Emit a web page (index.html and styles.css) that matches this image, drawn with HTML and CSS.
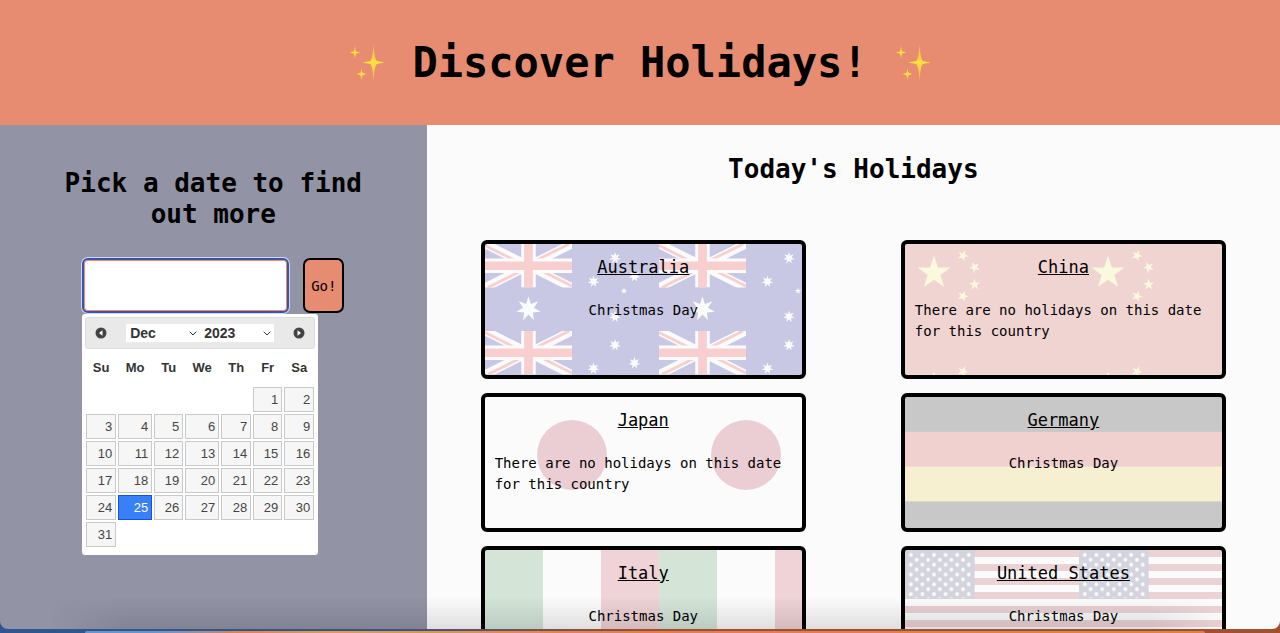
FILE: index.html
```html
<!DOCTYPE html>
<html lang="en">
<head>
<meta charset="utf-8">
<title>Discover Holidays!</title>
<link rel="stylesheet" href="styles.css">
</head>
<body>
<svg class="defs" width="0" height="0" aria-hidden="true">
  <defs>
    <linearGradient id="gold" x1="0" y1="0" x2="0" y2="1"><stop offset="0" stop-color="#f3b25a"/><stop offset=".5" stop-color="#ffe03c"/><stop offset="1" stop-color="#f3b64c"/></linearGradient>
    <symbol id="sparkles" viewBox="0 0 36 38">
      <g fill="url(#gold)">
        <path d="M24.500 0Q25.500 16 28 17L35.500 18.500L28 20Q25.500 21 24.500 37Q23.500 21 21 20L13.500 18.500L21 17Q23.500 16 24.500 0Z"/>
        <path d="M6 1Q6.500 7 7.700 7.500L11 8.500L7.700 9.500Q6.500 10 6 16Q5.500 10 4.300 9.500L1 8.500L4.300 7.500Q5.500 7 6 1Z"/>
        <path d="M12.500 23.500Q13 28.500 14.200 29L17.500 30L14.200 31Q13 31.500 12.500 37Q12 31.500 10.800 31L7.500 30L10.800 29Q12 28.500 12.500 23.500Z"/>
      </g>
    </symbol>
    <polygon id="star7" points="0,-100 19.300,-40 78.200,-62.300 43.300,-9.900 97.500,22.300 34.700,27.700 43.400,90.100 0,44.400 -43.400,90.100 -34.700,27.700 -97.500,22.300 -43.300,-9.900 -78.200,-62.300 -19.300,-40"/>
    <polygon id="star5" points="0,-100 22.500,-30.900 95.100,-30.900 36.300,11.800 58.800,80.900 0,38.200 -58.800,80.900 -36.300,11.800 -95.100,-30.900 -22.500,-30.900"/>
    <pattern id="flag-au" width="174" height="87" patternUnits="userSpaceOnUse">
      <rect width="174" height="87" fill="#00008b"/>
      <svg width="87" height="43.500" viewBox="0 0 60 30">
        <path d="M0 0L60 30M60 0L0 30" stroke="#fff" stroke-width="6"/>
        <path d="M0 1L30 16M30 14L60 29M30 14L58 0M30 16L2 30" stroke="#ee2020" stroke-width="2"/>
        <path d="M30 0V30M0 15H60" stroke="#fff" stroke-width="10"/>
        <path d="M30 0V30M0 15H60" stroke="#ee2020" stroke-width="6"/>
      </svg>
      <g fill="#fff">
        <use href="#star7" transform="translate(43.500 65) scale(.125)"/>
        <use href="#star7" transform="translate(130 14) scale(.06)"/>
        <use href="#star7" transform="translate(108.500 37.500) scale(.06)"/>
        <use href="#star7" transform="translate(149.500 32) scale(.06)"/>
        <use href="#star7" transform="translate(130 72.500) scale(.06)"/>
        <use href="#star5" transform="translate(139 47) scale(.034)"/>
      </g>
    </pattern>
    <pattern id="flag-cn" width="174" height="116" patternUnits="userSpaceOnUse">
      <rect width="174" height="116" fill="#c93c34"/>
      <g fill="#fff36a">
        <use href="#star5" transform="translate(29 29) scale(.174)"/>
        <use href="#star5" transform="translate(58 11.600) rotate(-120) scale(.058)"/>
        <use href="#star5" transform="translate(69.600 23.200) rotate(-98) scale(.058)"/>
        <use href="#star5" transform="translate(69.600 40.600) rotate(-74) scale(.058)"/>
        <use href="#star5" transform="translate(58 52.200) rotate(-51) scale(.058)"/>
      </g>
    </pattern>
    <pattern id="flag-jp" width="174" height="116" patternUnits="userSpaceOnUse">
      <rect width="174" height="116" fill="#fff"/><circle cx="87" cy="58" r="35" fill="#b01f3c"/>
    </pattern>
    <pattern id="flag-de" width="174" height="104.400" patternUnits="userSpaceOnUse">
      <rect width="174" height="35" fill="#000"/><rect y="34.800" width="174" height="35" fill="#cc2c2c"/><rect y="69.600" width="174" height="35" fill="#eac92c"/>
    </pattern>
    <pattern id="flag-it" width="174" height="116" patternUnits="userSpaceOnUse">
      <rect width="174" height="116" fill="#fff"/><rect width="58" height="116" fill="#3c9050"/><rect x="116" width="58" height="116" fill="#c43745"/>
    </pattern>
    <pattern id="us-stars" width="11.600" height="9.800" patternUnits="userSpaceOnUse">
      <circle cx="5.800" cy="4.900" r="1.900" fill="#fff"/>
      <g fill="#fff"><circle r="1.900"/><circle cx="11.600" r="1.900"/><circle cy="9.800" r="1.900"/><circle cx="11.600" cy="9.800" r="1.900"/></g>
    </pattern>
    <pattern id="flag-us" width="174" height="91" patternUnits="userSpaceOnUse">
      <rect width="174" height="91" fill="#fff"/>
      <path d="M0 3.500H174M0 17.500H174M0 31.500H174M0 45.500H174M0 59.500H174M0 73.500H174M0 87.500H174" stroke="#a83240" stroke-width="7"/>
      <rect width="69.600" height="49" fill="#3c3f70"/>
      <rect x="-3" y="-3" width="63" height="46" transform="translate(5.800 4.900)" fill="url(#us-stars)"/>
    </pattern>
  </defs>
</svg>

<div class="window">
  <header class="banner">
    <svg class="sparkles" aria-hidden="true"><use href="#sparkles"/></svg>
    <h1 class="title">Discover Holidays!</h1>
    <svg class="sparkles" aria-hidden="true"><use href="#sparkles"/></svg>
  </header>

  <div class="columns">
    <aside class="picker">
      <h2 class="heading">Pick a date to find out more</h2>
      <div class="picker-body">
        <form class="date-form">
          <input class="date-input" type="text" aria-label="Date">
          <button class="go" type="button">Go!</button>
        </form>
        <div class="calendar">
          <div class="calendar-bar">
            <button class="nav" type="button" aria-label="Previous month"><svg viewBox="0 0 12 12"><circle cx="6" cy="6" r="5.500" fill="#444"/><path d="M7.500 3.200V8.800L4 6Z" fill="#fff"/></svg></button>
            <div class="selects">
              <span class="select-wrap"><select class="select" aria-label="Month"><option>Dec</option></select><svg class="chevron" viewBox="0 0 8 5"><path d="M.7 .7L4 4L7.300 .7" fill="none" stroke="#333"/></svg></span>
              <span class="select-wrap"><select class="select" aria-label="Year"><option>2023</option></select><svg class="chevron" viewBox="0 0 8 5"><path d="M.7 .7L4 4L7.300 .7" fill="none" stroke="#333"/></svg></span>
            </div>
            <button class="nav" type="button" aria-label="Next month"><svg viewBox="0 0 12 12"><circle cx="6" cy="6" r="5.500" fill="#444"/><path d="M4.500 3.200V8.800L8 6Z" fill="#fff"/></svg></button>
          </div>
          <table class="days">
            <colgroup><col class="c-32"><col class="c-36"><col class="c-31"><col class="c-36"><col class="c-32"><col class="c-31"><col class="c-32"></colgroup>
            <thead><tr><th>Su</th><th>Mo</th><th>Tu</th><th>We</th><th>Th</th><th>Fr</th><th>Sa</th></tr></thead>
            <tbody>
              <tr><td></td><td></td><td></td><td></td><td></td><td><a href="#">1</a></td><td><a href="#">2</a></td></tr>
              <tr><td><a href="#">3</a></td><td><a href="#">4</a></td><td><a href="#">5</a></td><td><a href="#">6</a></td><td><a href="#">7</a></td><td><a href="#">8</a></td><td><a href="#">9</a></td></tr>
              <tr><td><a href="#">10</a></td><td><a href="#">11</a></td><td><a href="#">12</a></td><td><a href="#">13</a></td><td><a href="#">14</a></td><td><a href="#">15</a></td><td><a href="#">16</a></td></tr>
              <tr><td><a href="#">17</a></td><td><a href="#">18</a></td><td><a href="#">19</a></td><td><a href="#">20</a></td><td><a href="#">21</a></td><td><a href="#">22</a></td><td><a href="#">23</a></td></tr>
              <tr><td><a href="#">24</a></td><td><a class="today" href="#">25</a></td><td><a href="#">26</a></td><td><a href="#">27</a></td><td><a href="#">28</a></td><td><a href="#">29</a></td><td><a href="#">30</a></td></tr>
              <tr><td><a href="#">31</a></td><td></td><td></td><td></td><td></td><td></td><td></td></tr>
            </tbody>
          </table>
        </div>
      </div>
    </aside>

    <main class="holidays">
      <h2 class="heading">Today's Holidays</h2>
      <div class="cards">
        <article class="card"><svg class="flag" aria-hidden="true"><rect width="100%" height="100%" fill="url(#flag-au)"/></svg><h3 class="country">Australia</h3><p class="holiday">Christmas Day</p></article>
        <article class="card"><svg class="flag" aria-hidden="true"><rect width="100%" height="100%" fill="url(#flag-cn)"/></svg><h3 class="country">China</h3><p class="holiday">There are no holidays on this date for this country</p></article>
        <article class="card"><svg class="flag" aria-hidden="true"><rect width="100%" height="100%" fill="url(#flag-jp)"/></svg><h3 class="country">Japan</h3><p class="holiday">There are no holidays on this date for this country</p></article>
        <article class="card"><svg class="flag" aria-hidden="true"><rect width="100%" height="100%" fill="url(#flag-de)"/></svg><h3 class="country">Germany</h3><p class="holiday">Christmas Day</p></article>
        <article class="card"><svg class="flag" aria-hidden="true"><rect width="100%" height="100%" fill="url(#flag-it)"/></svg><h3 class="country">Italy</h3><p class="holiday">Christmas Day</p></article>
        <article class="card"><svg class="flag" aria-hidden="true"><rect width="100%" height="100%" fill="url(#flag-us)"/></svg><h3 class="country">United States</h3><p class="holiday">Christmas Day</p></article>
      </div>
    </main>
  </div>
</div>
<div class="desktop"><div class="dock"></div></div>
</body>
</html>
```
FILE: styles.css
```css
* { box-sizing: border-box; }

body {
  margin: 0;
  height: 100vh;
  display: flex;
  flex-direction: column;
  overflow: hidden;
  background: linear-gradient(90deg, #2f568f 0 30%, #a0502c 50%);
  color: #000;
  font-family: "DejaVu Sans Mono", monospace;
}

.defs { position: absolute; }

/* Browser window */
.window {
  position: relative;
  flex: 1;
  min-height: 0;
  display: flex;
  flex-direction: column;
  overflow: hidden;
  border-radius: 0 0 8px 8px;
}

.window::after {
  content: "";
  position: absolute;
  inset: auto 50px 0 50px;
  height: 32px;
  background: linear-gradient(transparent, rgba(0, 0, 0, .11));
  -webkit-mask-image: linear-gradient(90deg, transparent, #000 80px calc(100% - 80px), transparent);
  mask-image: linear-gradient(90deg, transparent, #000 80px calc(100% - 80px), transparent);
  pointer-events: none;
}

.banner {
  flex: none;
  display: flex;
  align-items: center;
  justify-content: center;
  gap: 27px;
  padding: 36px 0;
  background: #e78c71;
}

.title {
  margin: 0;
  font-size: 42px;
  line-height: 53px;
}

.sparkles { width: 36px; height: 38px; }

.columns {
  flex: 1;
  min-height: 0;
  display: grid;
  grid-template-columns: 1fr 2fr;
}

.heading {
  margin: 0;
  font-size: 26px;
  line-height: 31px;
  text-align: center;
}

/* Date picker column */
.picker {
  display: flex;
  flex-direction: column;
  align-items: center;
  gap: 28px;
  padding: 43px 48px 0;
  background: #9294a6;
}

.date-form { display: flex; gap: 14px; }

.date-input {
  width: 207px;
  height: 55px;
  border: 2px solid #3c52a6;
  border-radius: 6px;
  outline: none;
  background: #fff;
  box-shadow: 0 0 0 1px #ccd6f4, inset 0 0 0 1px #e78c71;
  font: inherit;
  font-size: 14px;
}

.go {
  padding: 0 6px;
  border: 2px solid #000;
  border-radius: 7px;
  background: #e78c71;
  color: #000;
  font: inherit;
  font-size: 14px;
}

.calendar {
  width: 236px;
  margin-top: 1px;
  padding: 3px;
  border-radius: 3px;
  background: #fff;
  color: #333;
  font-family: "Liberation Sans", Arial, sans-serif;
  font-size: 14px;
}

.calendar-bar {
  display: flex;
  align-items: center;
  justify-content: space-between;
  height: 32px;
  padding: 0 9px;
  border: 1px solid #ddd;
  border-radius: 3px;
  background: #e9e9e9;
}

.nav {
  width: 12px;
  height: 12px;
  padding: 0;
  border: 0;
  background: none;
}

.nav svg { display: block; width: 12px; height: 12px; }

.selects { display: flex; }

.select-wrap { position: relative; }

.select {
  display: block;
  width: 74px;
  height: 18px;
  padding: 0 4px;
  appearance: none;
  border: 0;
  border-radius: 0;
  background: #fff;
  color: #333;
  font: bold 14px/18px "Liberation Sans", Arial, sans-serif;
}

.chevron {
  position: absolute;
  right: 3px;
  top: 7px;
  width: 8px;
  height: 5px;
  pointer-events: none;
}

.days {
  width: 100%;
  table-layout: fixed;
  border-collapse: collapse;
  margin-bottom: 4px;
}

.c-31 { width: 31px; }
.c-32 { width: 32px; }
.c-36 { width: 36px; }

.days th {
  height: 37px;
  padding: 0;
  font-size: 13px;
  vertical-align: middle;
}

.days td { height: 27px; padding: 1px; }

.days a {
  display: block;
  padding: 3px 3px 3px 0;
  border: 1px solid #c9c9c9;
  background: #f6f6f6;
  color: #454545;
  font-size: 13px;
  line-height: 17px;
  text-align: right;
  text-decoration: none;
}

.days a.today {
  border-color: #1b4fe0;
  background: #3880f8;
  color: #fff;
}

/* Holiday cards */
.holidays {
  min-height: 0;
  overflow: hidden;
  padding: 29px 54px 0;
  background: #fbfbfb;
}

.cards {
  display: grid;
  grid-template-columns: 1fr 1fr;
  gap: 14px 95px;
  margin-top: 55px;
}

.card {
  position: relative;
  display: flex;
  flex-direction: column;
  align-items: center;
  gap: 22px;
  min-height: 139px;
  padding: 12px 10px;
  border: 4px solid #000;
  border-radius: 6px;
}

.flag {
  position: absolute;
  inset: 0;
  width: 100%;
  height: 100%;
  opacity: .2;
}

.country, .holiday {
  position: relative;
  margin: 0;
  font-weight: normal;
}

.country {
  font-size: 17px;
  line-height: 22px;
  text-decoration: underline;
}

.holiday { font-size: 14px; line-height: 21px; }

/* Strip of desktop below the window */
.desktop {
  flex: none;
  height: 4px;
  padding: 2px 75px 0 85px;
}

.dock {
  height: 2px;
  border-radius: 8px 8px 0 0;
  background: linear-gradient(90deg, #6a95cc 0 6%, #db8550 14%, #de9a58 22%, #dc7f58 50%, #d98250);
}
```
